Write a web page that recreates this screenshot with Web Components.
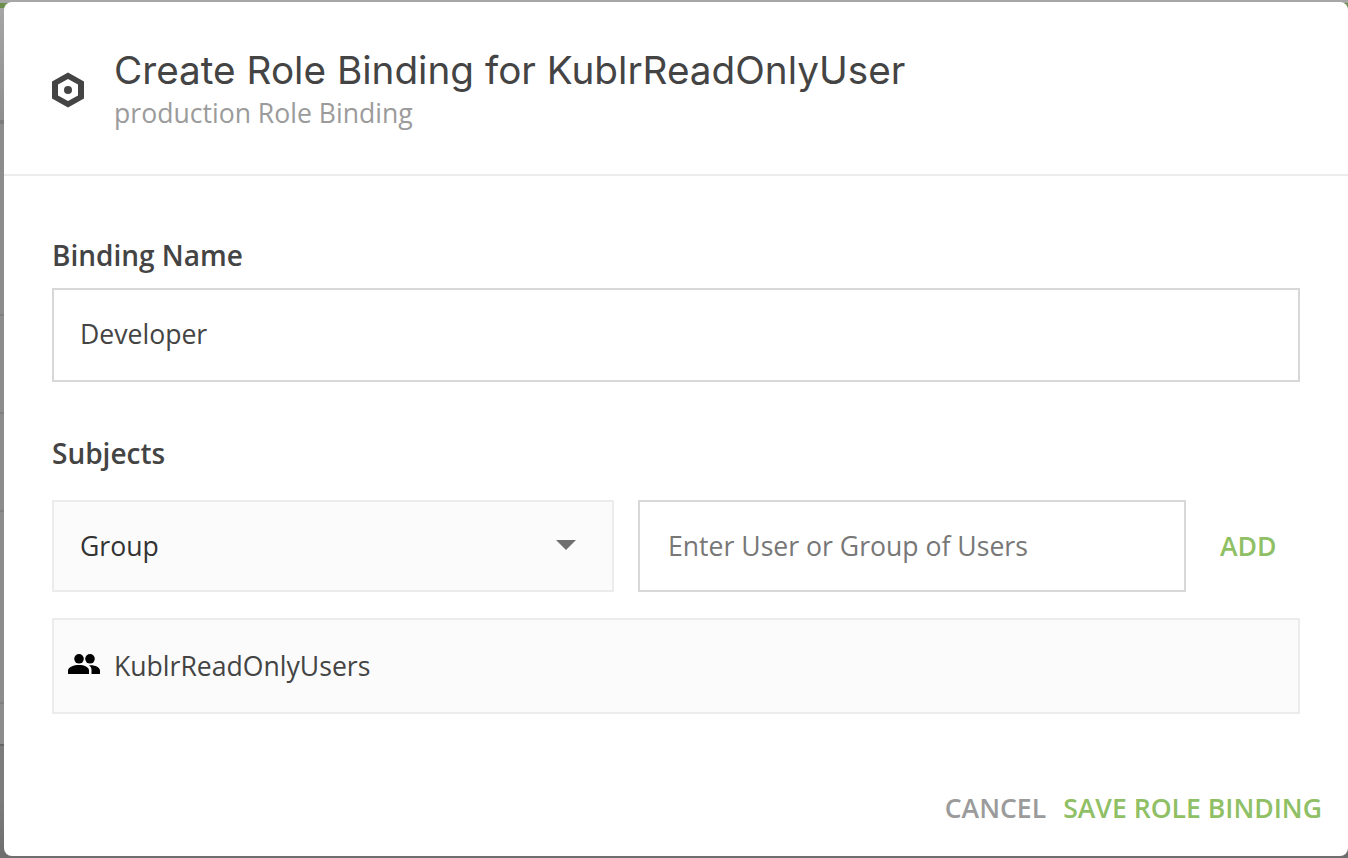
<!DOCTYPE html>
<html>
<head>
<meta charset="utf-8">
<title>Create Role Binding</title>
<style>
  html, body { margin: 0; height: 100%; }
  body {
    overflow: hidden;
    font-family: "Open Sans", sans-serif;
    background: linear-gradient(to bottom,
      #a6a6a6 0 3px,
      #6c8f4c 3px 8px,
      #a6a6a6 8px,
      #8e8e8e 120px,
      #7c7c7c 120px 124px,
      #8c8c8c 124px 314px,
      #7f7f7f 314px 316px,
      #8c8c8c 316px 412px,
      #7f7f7f 412px 414px,
      #8c8c8c 414px 510px,
      #7f7f7f 510px 512px,
      #8c8c8c 512px 702px,
      #7f7f7f 702px 704px,
      #8c8c8c 704px 744px,
      #666 744px 746px,
      #7c7c7c 746px 800px,
      #6e6e6e 856px);
  }
</style>
</head>
<body>
<role-dialog>
  <dialog-header slot="header" heading="Create Role Binding for KublrReadOnlyUser" sub="production Role Binding"></dialog-header>
  <form-label>Binding Name</form-label>
  <text-box value="Developer"></text-box>
  <form-label class="subjects">Subjects</form-label>
  <subject-row></subject-row>
  <subject-item>KublrReadOnlyUsers</subject-item>
  <dialog-actions slot="footer"></dialog-actions>
</role-dialog>

<script>
class RoleDialog extends HTMLElement {
  constructor() {
    super();
    this.attachShadow({ mode: 'open' });
    this.shadowRoot.innerHTML = `
      <style>
        :host {
          display: flex;
          flex-direction: column;
          box-sizing: border-box;
          height: 854px;
          margin: 2px 0 0 4px;
          background: #fff;
          border-radius: 8px;
        }
        .body {
          flex: 1;
          padding: 0 48px 0 48px;
          display: flex;
          flex-direction: column;
        }
      </style>
      <slot name="header"></slot>
      <div class="body"><slot></slot></div>
      <slot name="footer"></slot>
    `;
  }
}

class DialogHeader extends HTMLElement {
  constructor() {
    super();
    this.attachShadow({ mode: 'open' });
    this.shadowRoot.innerHTML = `
      <style>
        :host {
          display: flex;
          align-items: center;
          box-sizing: border-box;
          height: 174px;
          padding: 0 0 0 48px;
          border-bottom: 2px solid #ececec;
        }
        svg { width: 32px; height: 36px; margin-right: 31px; margin-top: 3px; flex: none; }
        .text { margin-top: 1px; margin-left: -1px; }
        h1 {
          margin: 0;
          font: 400 38.7px/48px Inter, sans-serif;
          color: #444;
        }
        p {
          margin: 1px 0 0;
          font: 400 26.6px/36px "Open Sans", sans-serif;
          color: #9b9b9b;
        }
      </style>
      <svg viewBox="0 0 32 36" aria-hidden="true">
        <path fill="#444" fill-rule="evenodd" d="M16 0.5 L32 9.5 V26.5 L16 35.5 L0 26.5 V9.5 Z M16 7 L6 12.6 V23.4 L16 29 L26 23.4 V12.6 Z"/>
        <circle cx="16" cy="18" r="4" fill="#444"/>
      </svg>
      <div class="text">
        <h1></h1>
        <p></p>
      </div>
    `;
    this.shadowRoot.querySelector('h1').textContent = this.getAttribute('heading');
    this.shadowRoot.querySelector('p').textContent = this.getAttribute('sub');
  }
}

class FormLabel extends HTMLElement {
  constructor() {
    super();
    this.attachShadow({ mode: 'open' });
    this.shadowRoot.innerHTML = `
      <style>
        :host {
          display: block;
          font: 600 28px/36px "Open Sans", sans-serif;
          color: #444;
          margin-top: 61px;
          margin-bottom: 15px;
        }
        :host(.subjects) { margin-top: 53px; margin-bottom: 29px; }
      </style>
      <slot></slot>
    `;
  }
}

class TextBox extends HTMLElement {
  constructor() {
    super();
    this.attachShadow({ mode: 'open' });
    this.shadowRoot.innerHTML = `
      <style>
        :host {
          display: flex;
          align-items: center;
          box-sizing: border-box;
          height: 94px;
          padding: 0 26px 2px;
          border: 2px solid #d8d8d8;
          font: 400 26.6px/36px "Open Sans", sans-serif;
          color: #444;
          background: #fff;
        }
        :host([placeholder]) { color: #777; padding: 0 28px; }
      </style>
      <span></span>
    `;
    this.shadowRoot.querySelector('span').textContent =
      this.getAttribute('value') || this.getAttribute('placeholder');
  }
}

class SelectBox extends HTMLElement {
  constructor() {
    super();
    this.attachShadow({ mode: 'open' });
    this.shadowRoot.innerHTML = `
      <style>
        :host {
          display: flex;
          align-items: center;
          justify-content: space-between;
          box-sizing: border-box;
          height: 92px;
          padding: 0 36px 0 26px;
          background: #fbfbfb;
          border: 2px solid #ececec;
          font: 400 26.6px/36px "Open Sans", sans-serif;
          color: #333;
        }
        svg { width: 20px; height: 10px; margin-top: -2px; }
      </style>
      <slot></slot>
      <svg viewBox="0 0 20 10" aria-hidden="true"><path fill="#6f6f6f" d="M0 0H20L10 10Z"/></svg>
    `;
  }
}

class SubjectRow extends HTMLElement {
  constructor() {
    super();
    this.attachShadow({ mode: 'open' });
    this.shadowRoot.innerHTML = `
      <style>
        :host {
          display: grid;
          grid-template-columns: 562px 548px 1fr;
          column-gap: 24px;
          align-items: center;
        }
        .add {
          font: 600 26.6px/36px "Open Sans", sans-serif;
          color: #8fc065;
          padding-left: 10px;
        }
        text-box { height: 92px; }
      </style>
      <select-box>Group</select-box>
      <text-box placeholder="Enter User or Group of Users"></text-box>
      <span class="add">ADD</span>
    `;
  }
}

class SubjectItem extends HTMLElement {
  constructor() {
    super();
    this.attachShadow({ mode: 'open' });
    this.shadowRoot.innerHTML = `
      <style>
        :host {
          display: flex;
          align-items: center;
          box-sizing: border-box;
          height: 96px;
          margin-top: 26px;
          padding: 0 0 0 14px;
          background: #fbfbfb;
          border: 2px solid #ececec;
          font: 400 26.6px/36px "Open Sans", sans-serif;
          color: #444;
        }
        svg { width: 32px; height: 20px; margin-right: 14px; margin-top: -4px; flex: none; }
      </style>
      <svg viewBox="0 0 32 20" aria-hidden="true">
        <circle cx="11" cy="4.8" r="4.8" fill="#000"/>
        <circle cx="22" cy="4.8" r="4.8" fill="#000"/>
        <path fill="#000" d="M0 20 V16.5 C0 13 6 11 11 11 C16 11 21 13 21 16.5 V20 Z"/>
        <path fill="#000" d="M23.5 20 V16 C23.5 14 22.6 12.4 21 11.3 C26 10.6 32 12.8 32 16.5 V20 Z"/>
      </svg>
      <slot></slot>
    `;
  }
}

class DialogActions extends HTMLElement {
  constructor() {
    super();
    this.attachShadow({ mode: 'open' });
    this.shadowRoot.innerHTML = `
      <style>
        :host {
          display: flex;
          justify-content: flex-end;
          gap: 17px;
          padding: 0 26px 30px 0;
          font: 600 26.6px/36px "Open Sans", sans-serif;
        }
        .cancel { color: #9b9b9b; }
        .save { color: #8fc065; }
      </style>
      <span class="cancel">CANCEL</span>
      <span class="save">SAVE ROLE BINDING</span>
    `;
  }
}

customElements.define('role-dialog', RoleDialog);
customElements.define('dialog-header', DialogHeader);
customElements.define('form-label', FormLabel);
customElements.define('text-box', TextBox);
customElements.define('select-box', SelectBox);
customElements.define('subject-row', SubjectRow);
customElements.define('subject-item', SubjectItem);
customElements.define('dialog-actions', DialogActions);
</script>
</body>
</html>
